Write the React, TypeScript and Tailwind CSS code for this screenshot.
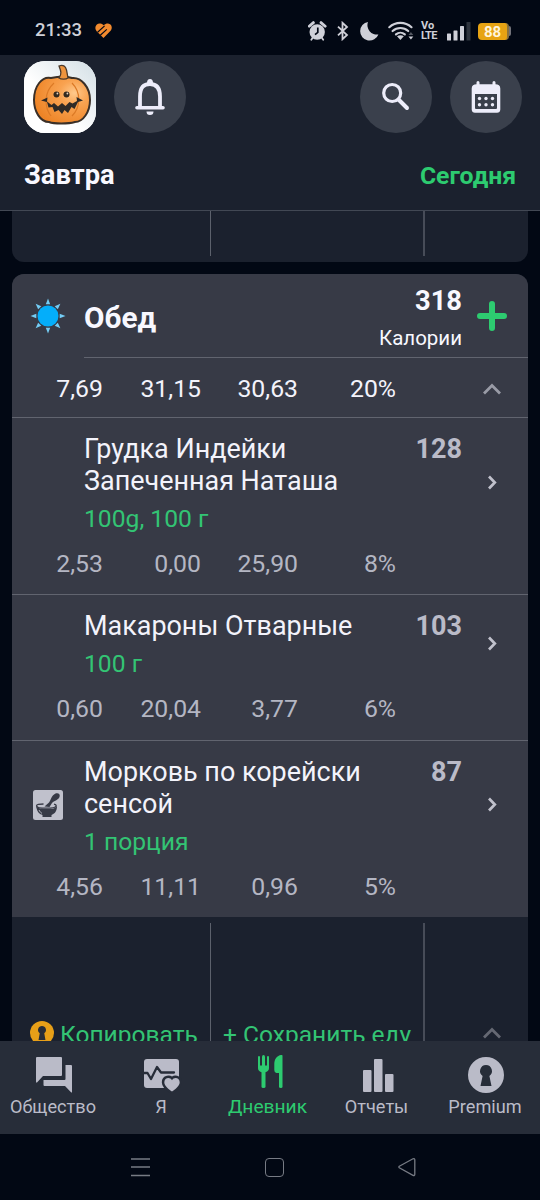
import type { ReactNode } from 'react';

interface FoodItem {
	name: string[];
	serving: string;
	calories: number;
	macros: string[];
	recipe?: boolean;
}

interface TabProps {
	label: string;
	active?: boolean;
	className: string;
	children: ReactNode;
}

const foods: FoodItem[] = [
	{
		name: ['Грудка Индейки', 'Запеченная Наташа'],
		serving: '100g, 100 г',
		calories: 128,
		macros: ['2,53', '0,00', '25,90', '8%'],
	},
	{
		name: ['Макароны Отварные'],
		serving: '100 г',
		calories: 103,
		macros: ['0,60', '20,04', '3,77', '6%'],
	},
	{
		name: ['Морковь по корейски', 'сенсой'],
		serving: '1 порция',
		calories: 87,
		macros: ['4,56', '11,11', '0,96', '5%'],
		recipe: true,
	},
];

const StatusBar = () => (
	<div className="flex h-[55px] shrink-0 items-center pt-[7px] pl-[35px] text-[#cfd0d8]">
		<span className="w-[60px] text-[18.5px] font-medium">21:33</span>
		<svg className="mr-[195px] h-4 w-[18px] shrink-0" viewBox="0 0 18 16">
			<path d="M8.500 15 1.600 8.200C-1.500 4.500 1.600 0 5.400.600 7 .900 8 1.600 8.700 2.300 10 1.200 11.500.500 13 .600c3.500.2 5 4.300 2.600 7.200Z" fill="#f28a2e" />
			<path d="M2.600 9.200 9.600 2.900M5.300 12.300l6.500-5.900" stroke="#030816" strokeWidth="1.200" />
		</svg>
		<svg className="h-5 w-[106px] shrink-0" viewBox="0 0 106 20" fill="currentColor">
			<circle cx="9.2" cy="11" r="7.7" />
			<path d="M1.2 5.2 5.4 1.6M17.2 5.2 13 1.6" stroke="currentColor" strokeWidth="2.8" strokeLinecap="round" />
			<path d="m4.5 17-1.2 1.8M14 17l1.2 1.8" stroke="currentColor" strokeWidth="1.8" strokeLinecap="round" />
			<path d="M9.8 6.4v5L7 13.6" fill="none" stroke="#030816" strokeWidth="1.7" />
			<path d="m30 5.6 9 8.4-4.5 4.2V1.8L39 6l-9 8.4" fill="none" stroke="currentColor" strokeWidth="1.8" />
			<path d="M60 .9a9.4 9.4 0 1 0 10.4 12.5A9.4 9.4 0 0 1 60 .9Z" />
			<g fill="none" stroke="currentColor" strokeWidth="2.2" strokeLinecap="round">
				<path d="M81.3 6.2c6.4-5.800 15.800-5.800 22.200 0" />
				<path d="M84.6 10c4.5-4 11.1-4 15.6 0" />
				<path d="M88 13.4c2.5-2.2 6.3-2.2 8.8 0" />
			</g>
			<path d="m89 15.2 3.4 3.8 3.4-3.8c-2-1.3-4.8-1.3-6.800 0Z" />
			<path d="m100.5 14 2.4-3 2.4 3Z" opacity=".4" />
			<path d="m100.5 15.6 2.4 3 2.4-3Z" />
		</svg>
		<div className="ml-[7px] flex w-[17px] flex-col items-start text-[11px] leading-[10px] font-bold">
			<span>Vo</span>
			<span className="tracking-[-0.7px]">LTE</span>
		</div>
		<svg className="ml-[9px] h-5 w-[24px] shrink-0" viewBox="0 0 24 20" fill="currentColor">
			<rect x="0" y="12.5" width="4" height="7" rx=".6" />
			<rect x="6.500" y="9.5" width="4" height="10" rx=".6" />
			<rect x="13" y="5" width="4" height="14.500" rx=".6" />
			<rect x="19.500" y="1" width="4" height="18.500" rx=".6" opacity=".22" />
		</svg>
		<div className="ml-[7px] flex h-[17px] w-[31px] items-center justify-center rounded-[4px] border-r-2 border-[#8a733d] bg-[#e7a313] pt-px text-[15px] leading-4 font-bold text-[#fff5dc]">
			88
		</div>
		<div className="h-[10px] w-[2px] rounded-r-full bg-[#73737a]" />
	</div>
);

const PumpkinAvatar = () => (
	<svg className="size-[72px] rounded-[21px] bg-white" viewBox="0 0 72 72">
		<defs>
			<radialGradient id="skin" cx=".72" cy=".35" r=".75">
				<stop offset="0" stopColor="#ffc98c" />
				<stop offset=".35" stopColor="#f9a351" />
				<stop offset="1" stopColor="#ee8426" />
			</radialGradient>
			<linearGradient id="sky" x1="0" y1="1" x2="1" y2="0">
				<stop offset=".4" stopColor="#fff" />
				<stop offset="1" stopColor="#d3dfe5" />
			</linearGradient>
		</defs>
		<rect width="72" height="72" fill="url(#sky)" />
		<path d="M27 17C35 15 43 15 48 17c9-1 18 9 18 22 0 12-7 22-15 22-7 2-21 2-26 0-9 0-15-11-15-22 0-14 8-24 17-22Z" fill="url(#skin)" stroke="#3b3028" strokeWidth="2" />
		<path d="M35 17c3-4 2-7 0-12 4-1.500 6.500 0 7.500 4l1.500 8c-2 1.500-7 1.500-9 0Z" fill="#ee943e" stroke="#4c3a2b" strokeWidth="1.300" />
		<path d="M30 22C20 31 20 46 27 55M48 22c9 9 9 24 0 33" fill="none" stroke="#dc7a26" strokeWidth="1.200" />
		<circle cx="32.500" cy="33.500" r="3" fill="#32291f" />
		<circle cx="42.500" cy="33.500" r="3" fill="#32291f" />
		<circle cx="33.400" cy="32.500" r=".9" fill="#e8d5c0" />
		<circle cx="43.400" cy="32.500" r=".9" fill="#e8d5c0" />
		<path d="m17 39.500 6.500-3-.5 4 4.500 3.500 2.500-2 4 3.500 4-3.500 3.500 3 4-4 3 1.500L53 40l-.5-4 6.500 3.500-5 1.500-3.500 7-3-2-3.500 6-3.500-3-2.500 4-3.500-4-4 2-2-5-4 .5-1.500-5.500Z" fill="#2f2a26" />
	</svg>
);

const RoundButton = ({ children }: { children: ReactNode }) => (
	<div className="flex size-[72px] items-center justify-center rounded-full bg-[#3a404c] text-[#ededfa]">{children}</div>
);

const Header = () => (
	<header className="h-[156px] shrink-0 border-b border-[#424854] bg-[#1b212e] px-6 pt-[6px]">
		<div className="-mr-[6px] flex">
			<PumpkinAvatar />
			<div className="mr-auto ml-[18px]">
				<RoundButton>
					<svg className="size-9" viewBox="0 0 36 36" fill="none" stroke="currentColor">
						<path d="M8 28V17.500C8 8 12 5 18 5s10 3 10 12.500V28" strokeWidth="3.800" />
						<path d="M5 28.700h26" strokeWidth="3.600" strokeLinecap="round" />
						<path d="M15 4a3 4 0 0 1 6 0ZM14.500 32.500h7a3.500 3.500 0 0 1-7 0Z" fill="currentColor" stroke="none" />
					</svg>
				</RoundButton>
			</div>
			<div className="mr-[18px]">
				<RoundButton>
					<svg className="size-9" viewBox="0 0 36 36" fill="none" stroke="currentColor">
						<circle cx="14.200" cy="14" r="8.500" strokeWidth="3.200" />
						<path d="m20.500 20.500 8.500 8.500" strokeWidth="4" strokeLinecap="round" />
					</svg>
				</RoundButton>
			</div>
			<RoundButton>
				<svg className="size-9" viewBox="0 0 36 36" fill="currentColor">
					<path d="M8.500 3.500a1.500 1.500 0 0 1 3 0V5.300h13V3.500a1.500 1.500 0 0 1 3 0V5.300c2.800 0 4.800 1.400 4.800 4.200v21c0 2-1.300 3.300-3.300 3.300H7c-2 0-3.300-1.300-3.300-3.300v-21c0-2.800 2-4.200 4.800-4.200ZM7 15v14q0 1 1 1h20q1 0 1-1V15Z" fillRule="evenodd" />
					{[11.5, 18, 24.5].map((x) => (
						<g key={x}>
							<circle cx={x} cy="19.500" r="1.700" />
							<circle cx={x} cy="25.800" r="1.700" />
						</g>
					))}
				</svg>
			</RoundButton>
		</div>
		<div className="flex items-center justify-between pt-[25px]">
			<h1 className="text-[27.300px] leading-8 font-bold text-[#f8f8ff]">Завтра</h1>
			<span className="pt-[2px] text-[24.750px] leading-8 font-bold text-[#2dcb70]">Сегодня</span>
		</div>
	</header>
);

const MacroRow = ({ values }: { values: string[] }) => (
	<div className="grid grid-cols-[91px_98px_97px_98px] text-right text-[24.800px] leading-6">
		{values.map((value, i) => (
			<span key={i}>{value}</span>
		))}
	</div>
);

const ChevronUp = ({ className }: { className: string }) => (
	<svg className={className} width="18" height="12" viewBox="0 0 18 12" fill="none" stroke="currentColor" strokeWidth="2.8">
		<path d="m1 10.500 8-8 8 8" />
	</svg>
);

const RecipeIcon = () => (
	<svg className="size-[30px]" viewBox="0 0 30 30">
		<rect width="30" height="30" rx="2.500" fill="#c0c1cc" />
		<path d="M3 15.500C4 23 7 24 9.500 25v2h9v-2c4-1.500 5.500-4.500 5.500-9.500-1 3-5 3.500-9 3.500-6 0-10.500-.5-12-3.500Z" fill="#373a46" />
		<path d="M10.500 14C6 14 3.600 14.400 3.600 15.700S7 18.200 13 18.200s10.200-1 10.200-2.500c0-.8-1-1.200-2.200-1.500" fill="none" stroke="#373a46" strokeWidth="1.300" />
		<path d="m11.500 16.500 4.500-4c2-2 2-7 6.500-9 3-1 5 1 4 3.500-1.500 3.500-5.500 3.500-7.500 6L16.500 17Z" fill="#373a46" />
		<path d="M6 20c1 2 2 2.800 3 3.300" fill="none" stroke="#c0c1cc" strokeWidth=".9" />
	</svg>
);

const FoodRow = ({ food }: { food: FoodItem }) => (
	<div className="border-t border-[#61646f] pt-[15.200px] pb-[18.100px]">
		<div className="flex">
			<div className="flex w-[72px] items-center justify-center">{food.recipe && <RecipeIcon />}</div>
			<div className="flex-1">
				{food.name.map((line) => (
					<p key={line} className="text-[26.950px] leading-8 whitespace-nowrap text-[#f3f3fb]">
						{line}
					</p>
				))}
				<p className="mt-[10px] text-[24.650px] leading-6 text-[#33c474]">{food.serving}</p>
			</div>
			<span className="text-[27px] leading-8 font-bold text-[#babbc8]">{food.calories}</span>
			<div className="flex w-[66px] items-center pl-[26px]">
				<svg className="h-[15px] w-[9px]" viewBox="0 0 9 15" fill="none" stroke="#c0c1cc" strokeWidth="2.700">
					<path d="m1 1.500 5.800 6L1 13.500" />
				</svg>
			</div>
		</div>
		<div className="mt-[21px] text-[#b4b6c3]">
			<MacroRow values={food.macros} />
		</div>
	</div>
);

const Keyhole = ({ className }: { className: string }) => (
	<svg className={className} viewBox="0 0 36 36">
		<circle cx="18" cy="18" r="18" fill="currentColor" />
		<path d="M18 7.500a6 6 0 0 1 3.400 10.900L23.200 28.500H12.800l1.800-10.100A6 6 0 0 1 18 7.500Z" fill="#272c38" />
	</svg>
);

const MealCard = () => (
	<section className="mx-3 mt-3 flex-1 overflow-hidden rounded-t-xl bg-[#1b212e]">
		<div className="bg-[#373a46]">
			<div className="flex h-[84px]">
				<div className="flex w-[72px] justify-center pt-6">
					<svg className="size-9" viewBox="0 0 36 36">
						{[0, 45, 90, 135, 180, 225, 270, 315].map((angle) => (
							<path key={angle} d="m18 .500 2.200 5.800h-4.400Z" fill="#74cdf5" transform={`rotate(${angle} 18 18)`} />
						))}
						<circle cx="18" cy="18" r="10.500" fill="#04aefa" />
					</svg>
				</div>
				<div className="flex flex-1 justify-between border-b border-[#61646f] pr-[21px]">
					<h2 className="pt-[28px] text-[29.700px] leading-8 font-bold text-[#f8f8ff]">Обед</h2>
					<div className="flex">
						<div className="pt-[11px] text-right text-[#f8f8ff]">
							<p className="text-[27.300px] leading-8 font-bold">318</p>
							<p className="mt-[9px] text-[20.500px] leading-6">Калории</p>
						</div>
						<svg className="mt-[27px] ml-[15px] size-[30px]" viewBox="0 0 30 30" stroke="#2dcb70" strokeWidth="6" strokeLinecap="round">
							<path d="M15 3v24M3 15h24" />
						</svg>
					</div>
				</div>
			</div>
			<div className="flex h-[59px] items-center justify-between pt-[2px] pr-[27px] text-[#f3f3fb]">
				<MacroRow values={['7,69', '31,15', '30,63', '20%']} />
				<ChevronUp className="text-[#999ba6]" />
			</div>
			{foods.map((food) => (
				<FoodRow key={food.serving} food={food} />
			))}
		</div>
		<div className="mt-[6px] flex h-[136px] text-[24.550px] leading-7 text-[#33c474]">
			<div className="flex w-[199px] items-end border-r border-[#5c616c] pb-[10px] pl-[18px]">
				<Keyhole className="mr-[6px] mb-1 size-6 shrink-0 text-[#e79f18]" />
				<span className="whitespace-nowrap">Копировать</span>
			</div>
			<div className="flex w-[214px] items-end border-r-2 border-[#474c58] pb-[10px] pl-3">
				<span className="whitespace-nowrap">+ Сохранить еду</span>
			</div>
			<ChevronUp className="mt-[104px] mr-[27px] ml-auto text-[#656873]" />
		</div>
	</section>
);

const Tab = ({ label, active, className, children }: TabProps) => (
	<div className={`flex flex-col items-center pt-[12px] ${active ? 'text-[#2dcb70]' : 'text-[#babbc8]'} ${className}`}>
		<svg className="size-[42px]" viewBox="0 0 42 42" fill="currentColor">
			{children}
		</svg>
		<span className={`leading-6 whitespace-nowrap ${active ? 'text-[19.200px]' : 'text-[18.150px]'}`}>{label}</span>
	</div>
);

const TabBar = () => (
	<nav className="flex h-[93px] shrink-0 bg-[#272d39]">
		<Tab label="Общество" className="w-[106px]">
			<path d="M5 4h24q1 0 1 1v17q0 1-1 1H11l-6 6.500q-1 .5-1-1V5q0-1 1-1Z" />
			<path d="M33.500 12H39q1 0 1 1v26q0 1-1 .3L33 33H12.500q-1 0-1-1v-5h21q1 0 1-1Z" />
		</Tab>
		<Tab label="Я" className="w-[110px]">
			<rect x="4" y="6" width="35" height="29" rx="3" />
			<path d="M3 20h4.500l3.500 6 6-12 4 5.500h13" fill="none" stroke="#272d39" strokeWidth="2.300" strokeLinejoin="round" strokeLinecap="round" />
			<path d="M32 38.500c-3-2-7.700-5.500-7.700-9.300 0-4.600 5.800-5.700 7.700-2 1.900-3.700 7.700-2.600 7.700 2 0 3.800-4.700 7.300-7.700 9.300Z" stroke="#272d39" strokeWidth="5" />
			<path d="M32 38.500c-3-2-7.700-5.500-7.700-9.300 0-4.600 5.800-5.700 7.700-2 1.900-3.700 7.700-2.600 7.700 2 0 3.800-4.700 7.300-7.700 9.300Z" />
		</Tab>
		<Tab label="Дневник" active className="w-[103px]">
			<g transform="translate(2.500 0)">
				<path d="M9.500 3q1 0 1 1v8.500h2V4q0-2 1.500-2t1.500 2v8.500h2V4q0-1 1-1t1 1v11c0 2-1 3.600-3.500 4.200V34q0 1-2 1t-2-1V19.200C9.500 18.600 8.500 17 8.500 15V4q0-1 1-1Z" />
				<path d="M33 2.500V34q0 1-1.700 1T29.500 34V20h-2.700q-2-.5-2-3V11c0-5 3-8.500 6.700-9q1.500-.2 1.500.5Z" />
			</g>
		</Tab>
		<Tab label="Отчеты" className="w-[115px]">
			<rect x="7" y="17" width="8.500" height="22" rx="1" />
			<rect x="18" y="6" width="8.500" height="33" rx="1" />
			<rect x="29" y="21" width="8.500" height="18" rx="1" />
		</Tab>
		<Tab label="Premium" className="w-[102px]">
			<path d="M22 4a18 18 0 1 0 0 36 18 18 0 0 0 0-36ZM22 12a6 6 0 0 1 3.400 10.900L27.500 33H16.500l2.100-10.100A6 6 0 0 1 22 12Z" fillRule="evenodd" />
		</Tab>
	</nav>
);

const SystemNav = () => (
	<div className="flex h-[66px] shrink-0 items-center pl-[131px] text-[#777b84]">
		<svg className="h-5 w-[19px]" viewBox="0 0 19 20" stroke="currentColor" strokeWidth="1.400">
			<path d="M0 2h19M0 10h19M0 18.500h19" />
		</svg>
		<div className="ml-[115px] size-[19px] rounded-[4px] border border-[#777b84]" />
		<svg className="ml-[114px] h-5 w-[18px]" viewBox="0 0 18 20" fill="none" stroke="currentColor" strokeWidth="1.300">
			<path d="M1.300 9.300 15 1.800q1.800-.7 1.800 1v14.500q0 1.700-1.800 1L1.300 10.800q-.8-.7 0-1.500Z" />
		</svg>
	</div>
);

export default function App() {
	return (
		<main className="flex h-[1200px] w-[540px] flex-col overflow-hidden bg-[#020814] font-['Roboto',sans-serif]">
			<StatusBar />
			<Header />
			<div className="flex h-[830px] shrink-0 flex-col overflow-hidden">
				<div className="mx-3 flex h-[51px] shrink-0 rounded-b-xl bg-[#1b212e] pb-[6px]">
					<div className="w-[199px] border-r border-[#5c616c]" />
					<div className="w-[214px] border-r-2 border-[#474c58]" />
				</div>
				<MealCard />
			</div>
			<TabBar />
			<SystemNav />
		</main>
	);
}
